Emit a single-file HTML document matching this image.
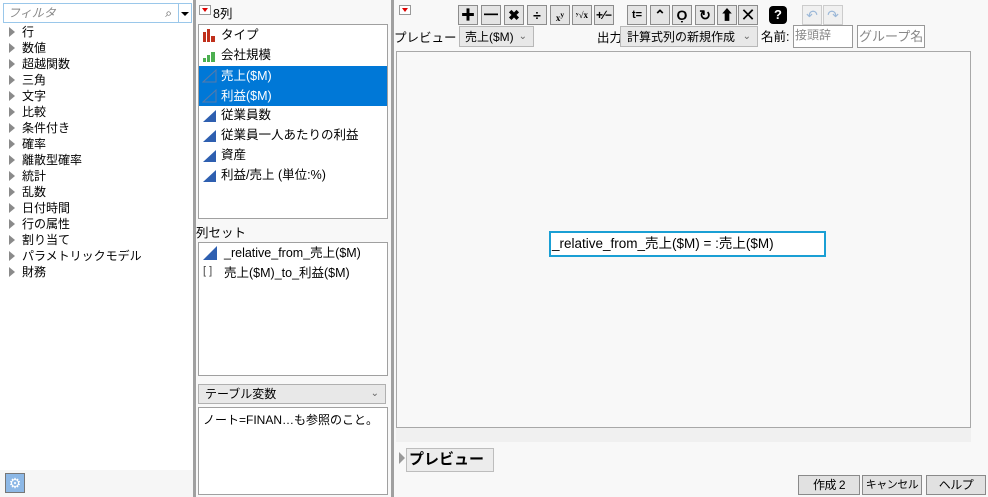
<!DOCTYPE html>
<html style="width:988px;height:497px;overflow:hidden"><head><meta charset="utf-8">
<style>
*{box-sizing:border-box;margin:0;padding:0}
body{width:988px;height:497px;overflow:hidden;background:#f0f0f0;font-family:"Liberation Sans","Noto Sans CJK JP",sans-serif;font-size:12px;color:#000;position:relative}
.abs{position:absolute;white-space:nowrap}
.tri{position:absolute;width:0;height:0;border-top:5px solid transparent;border-bottom:5px solid transparent;border-left:6px solid #8a8a8a}
.li{position:absolute;left:22px;font-size:12px;line-height:16px}
.ml{position:absolute;left:22px;font-size:12.5px;line-height:20px;height:20px;white-space:nowrap}
.tb{position:absolute;top:5px;width:20px;height:20px;background:#e4e4e4;border:1px solid #8c8c8c;font-weight:bold;font-size:14px;text-align:center;line-height:18px;overflow:hidden}
.btn{position:absolute;top:475px;height:20px;background:#e1e1e1;border:1px solid #8a8a8a;font-size:12px;text-align:center;line-height:18px;white-space:nowrap;overflow:hidden;letter-spacing:-0.5px}
.rt{position:absolute;width:0;height:0}
</style></head><body>
<div class="abs" style="left:0;top:0;width:193px;height:497px;background:#fff"></div>
<div class="abs" style="left:3px;top:3px;width:176px;height:20px;border:1px solid #9ac7ea;background:#fff;font-style:italic;color:#888;padding-left:4px;line-height:18px">フィルタ<span style="position:absolute;right:6px;color:#555;font-style:normal">⌕</span></div>
<div class="abs" style="left:179px;top:3px;width:13px;height:20px;border:1px solid #9ac7ea;border-left:none;background:#fff"><div class="rt" style="left:2px;top:8px;border-left:4px solid transparent;border-right:4px solid transparent;border-top:4px solid #000"></div></div>
<div class="tri" style="left:9px;top:27px"></div><div class="li" style="top:24px">行</div>
<div class="tri" style="left:9px;top:43px"></div><div class="li" style="top:40px">数値</div>
<div class="tri" style="left:9px;top:59px"></div><div class="li" style="top:56px">超越関数</div>
<div class="tri" style="left:9px;top:75px"></div><div class="li" style="top:72px">三角</div>
<div class="tri" style="left:9px;top:91px"></div><div class="li" style="top:88px">文字</div>
<div class="tri" style="left:9px;top:107px"></div><div class="li" style="top:104px">比較</div>
<div class="tri" style="left:9px;top:123px"></div><div class="li" style="top:120px">条件付き</div>
<div class="tri" style="left:9px;top:139px"></div><div class="li" style="top:136px">確率</div>
<div class="tri" style="left:9px;top:155px"></div><div class="li" style="top:152px">離散型確率</div>
<div class="tri" style="left:9px;top:171px"></div><div class="li" style="top:168px">統計</div>
<div class="tri" style="left:9px;top:187px"></div><div class="li" style="top:184px">乱数</div>
<div class="tri" style="left:9px;top:203px"></div><div class="li" style="top:200px">日付時間</div>
<div class="tri" style="left:9px;top:219px"></div><div class="li" style="top:216px">行の属性</div>
<div class="tri" style="left:9px;top:235px"></div><div class="li" style="top:232px">割り当て</div>
<div class="tri" style="left:9px;top:251px"></div><div class="li" style="top:248px">パラメトリックモデル</div>
<div class="tri" style="left:9px;top:267px"></div><div class="li" style="top:264px">財務</div>
<div class="abs" style="left:0;top:470px;width:193px;height:27px;background:#f6f6f6"></div>
<div class="abs" style="left:5px;top:473px;width:20px;height:20px;background:#8db8e6;border:1px solid #777;color:#fff;text-align:center;line-height:18px;font-size:14px">⚙</div>
<div class="abs" style="left:193px;top:0;width:3px;height:497px;background:#a0a0a0"></div>
<div class="abs" style="left:196px;top:0;width:195px;height:497px;background:#f8f8f8"></div>
<div class="abs" style="left:199px;top:5px;width:12px;height:10px;background:#fff;border:1px solid #999"><div class="rt" style="left:2px;top:2px;border-left:3px solid transparent;border-right:3px solid transparent;border-top:4px solid #d00"></div></div>
<div class="abs" style="left:213px;top:3px;font-size:12.5px">8列</div>
<div class="abs" style="left:198px;top:24px;width:190px;height:195px;background:#fff;border:1px solid #a0a0a0"></div>
<div class="abs" style="left:199px;top:66px;width:188px;height:40px;background:#0078d7"></div>
<svg class="abs" style="left:202px;top:28px" width="16" height="160">
<rect x="1" y="4" width="3" height="10" fill="#c0301c"/><rect x="5" y="1" width="3" height="13" fill="#c0301c"/><rect x="9" y="8" width="4" height="6" fill="#c0301c"/>
<rect x="1" y="30" width="3" height="4" fill="#4caf50"/><rect x="5" y="27" width="3" height="7" fill="#4caf50"/><rect x="9" y="24" width="4" height="10" fill="#4caf50"/>
<polygon points="1,54 14,42 14,54" fill="none" stroke="#5a7aa8"/>
<polygon points="1,74 14,62 14,74" fill="none" stroke="#5a7aa8"/>
<polygon points="1,94 14,82 14,94" fill="#2e5fb0"/>
<polygon points="1,114 14,102 14,114" fill="#2e5fb0"/>
<polygon points="1,134 14,122 14,134" fill="#2e5fb0"/>
<polygon points="1,154 14,142 14,154" fill="#2e5fb0"/>
</svg>
<div class="ml" style="left:221px;top:25px">タイプ</div>
<div class="ml" style="left:221px;top:45px">会社規模</div>
<div class="ml" style="left:221px;top:66px;color:#fff">売上($M)</div>
<div class="ml" style="left:221px;top:86px;color:#fff">利益($M)</div>
<div class="ml" style="left:221px;top:105px">従業員数</div>
<div class="ml" style="left:221px;top:125px">従業員一人あたりの利益</div>
<div class="ml" style="left:221px;top:145px">資産</div>
<div class="ml" style="left:221px;top:165px">利益/売上 (単位:%)</div>
<div class="abs" style="left:196px;top:222px;font-size:12.5px">列セット</div>
<div class="abs" style="left:198px;top:242px;width:190px;height:134px;background:#fff;border:1px solid #a0a0a0"></div>
<svg class="abs" style="left:202px;top:245px" width="16" height="16"><polygon points="1,15 15,1 15,15" fill="#2e5fb0"/></svg>
<div class="ml" style="left:224px;top:243px">_relative_from_売上($M)</div>
<div class="abs" style="left:203px;top:265px;font-size:11px;color:#444">[ ]</div>
<div class="ml" style="left:224px;top:263px">売上($M)_to_利益($M)</div>
<div class="abs" style="left:198px;top:384px;width:188px;height:20px;background:#e8e8e8;border:1px solid #b0b0b0;padding-left:6px;line-height:18px">テーブル変数<span style="position:absolute;right:6px;color:#666;font-size:10px">⌄</span></div>
<div class="abs" style="left:198px;top:407px;width:190px;height:88px;background:#fff;border:1px solid #a0a0a0;padding:3px 4px;font-size:12px">ノート=FINAN…も参照のこと。</div>
<div class="abs" style="left:391px;top:0;width:3px;height:497px;background:#a0a0a0"></div>
<div class="abs" style="left:394px;top:0;width:594px;height:497px;background:#f8f8f8"></div>
<div class="abs" style="left:399px;top:5px;width:12px;height:10px;background:#fff;border:1px solid #999"><div class="rt" style="left:2px;top:2px;border-left:3px solid transparent;border-right:3px solid transparent;border-top:4px solid #d00"></div></div>
<div class="tb" style="left:458px">✚</div>
<div class="tb" style="left:481px">━</div>
<div class="tb" style="left:504px">✖</div>
<div class="tb" style="left:527px">÷</div>
<div class="tb" style="left:550px;font-size:9px;font-family:'Liberation Serif'">x<sup>y</sup></div>
<div class="tb" style="left:572px;font-size:9px;font-family:'Liberation Serif'">ʸ√x</div>
<div class="tb" style="left:594px;font-size:12px">+∕−</div>
<div class="tb" style="left:627px;font-size:11px">t=</div>
<div class="tb" style="left:650px">⌃</div>
<div class="tb" style="left:672px">Ọ</div>
<div class="tb" style="left:695px">↻</div>
<div class="tb" style="left:717px">⬆</div>
<div class="tb" style="left:738px;font-weight:normal;font-size:18px">✕</div>
<div class="abs" style="left:769px;top:6px;width:18px;height:18px;background:#000;border-radius:4px;color:#fff;font-weight:bold;text-align:center;line-height:18px;font-size:13px">?</div>
<div class="tb" style="left:802px;background:#f0f0f0;border-color:#ccc;color:#9cb8d8;font-weight:normal">↶</div>
<div class="tb" style="left:823px;background:#f0f0f0;border-color:#ccc;color:#9cb8d8;font-weight:normal">↷</div>
<div class="abs" style="left:394px;top:27px;font-size:12.5px">プレビュー</div>
<div class="abs" style="left:459px;top:26px;width:75px;height:21px;background:#e8e8e8;border:1px solid #b8b8b8;padding-left:5px;line-height:20px">売上($M)<span style="position:absolute;right:6px;color:#666;font-size:10px">⌄</span></div>
<div class="abs" style="left:597px;top:27px;font-size:12.5px">出力</div>
<div class="abs" style="left:620px;top:26px;width:138px;height:21px;background:#e8e8e8;border:1px solid #b8b8b8;padding-left:6px;line-height:20px">計算式列の新規作成<span style="position:absolute;right:6px;color:#666;font-size:10px">⌄</span></div>
<div class="abs" style="left:761px;top:26px;font-size:12.5px">名前:</div>
<div class="abs" style="left:793px;top:25px;width:60px;height:23px;background:#fff;border:1px solid #999;color:#888;padding-left:1px">接頭辞</div>
<div class="abs" style="left:857px;top:25px;width:68px;height:23px;background:#fff;border:1px solid #999;color:#888;padding-left:1px;font-size:13px">グループ名</div>
<div class="abs" style="left:396px;top:51px;width:575px;height:377px;background:#f8f8f8;border:1px solid #a8a8a8"></div>
<div class="abs" style="left:396px;top:428px;width:575px;height:14px;background:#f0f0f0"></div>
<div class="abs" style="left:549px;top:231px;width:277px;height:26px;border:2px solid #1a9fd4;background:#fff;font-size:13.5px;line-height:22px;padding-left:1px;white-space:nowrap">_relative_from_売上($M) = :売上($M)</div>
<div class="abs" style="left:399px;top:452px;width:0;height:0;border-top:6px solid transparent;border-bottom:6px solid transparent;border-left:6px solid #999"></div>
<div class="abs" style="left:406px;top:448px;width:88px;height:24px;background:#ececec;border:1px solid #bdbdbd;font-weight:bold;font-size:15px;line-height:22px;padding-left:2px">プレビュー</div>
<div class="btn" style="left:798px;width:62px">作成 2</div>
<div class="btn" style="left:862px;width:60px;font-size:11px">キャンセル</div>
<div class="btn" style="left:926px;width:60px">ヘルプ</div>
</body></html>
